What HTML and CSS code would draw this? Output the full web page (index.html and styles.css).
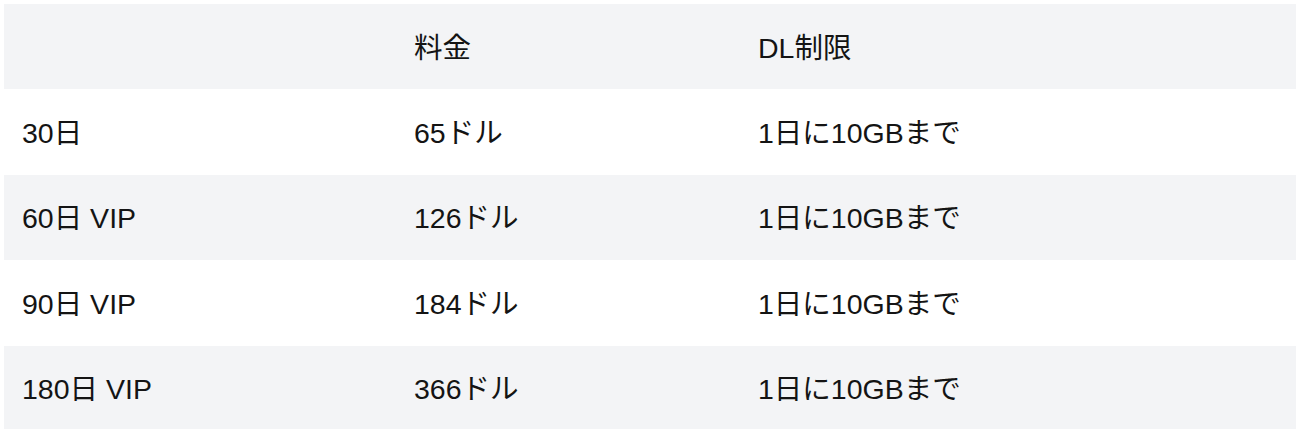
FILE: index.html
```html
<!DOCTYPE html>
<html lang="ja">
<head>
<meta charset="utf-8">
<title>料金表</title>
<link rel="stylesheet" href="styles.css">
</head>
<body>
<table class="price-table">
  <colgroup>
    <col class="col-plan">
    <col class="col-price">
    <col class="col-limit">
  </colgroup>
  <thead>
    <tr class="row-shade">
      <th></th>
      <th>料金</th>
      <th>DL制限</th>
    </tr>
  </thead>
  <tbody>
    <tr>
      <td>30日</td>
      <td>65ドル</td>
      <td>1日に10GBまで</td>
    </tr>
    <tr class="row-shade">
      <td>60日 VIP</td>
      <td>126ドル</td>
      <td>1日に10GBまで</td>
    </tr>
    <tr>
      <td>90日 VIP</td>
      <td>184ドル</td>
      <td>1日に10GBまで</td>
    </tr>
    <tr class="row-shade">
      <td>180日 VIP</td>
      <td>366ドル</td>
      <td>1日に10GBまで</td>
    </tr>
  </tbody>
</table>
</body>
</html>
```

FILE: styles.css
```css
html, body {
  background: #ffffff;
}

body {
  margin: 4px;
  font-family: "Liberation Sans", "Noto Sans CJK JP", sans-serif;
  color: #141414;
}

.price-table {
  width: 1292px;
  border-collapse: collapse;
  border-spacing: 0;
  table-layout: fixed;
  font-size: 28.5px;
}

.col-plan { width: 392px; }
.col-price { width: 344px; }
.col-limit { width: 556px; }

.price-table th,
.price-table td {
  height: 85.4px;
  box-sizing: border-box;
  padding: 2px 18px 0 18px;
  text-align: left;
  vertical-align: middle;
  font-weight: normal;
  line-height: 34px;
  white-space: nowrap;
}

.row-shade {
  background: #f3f4f6;
}
```
